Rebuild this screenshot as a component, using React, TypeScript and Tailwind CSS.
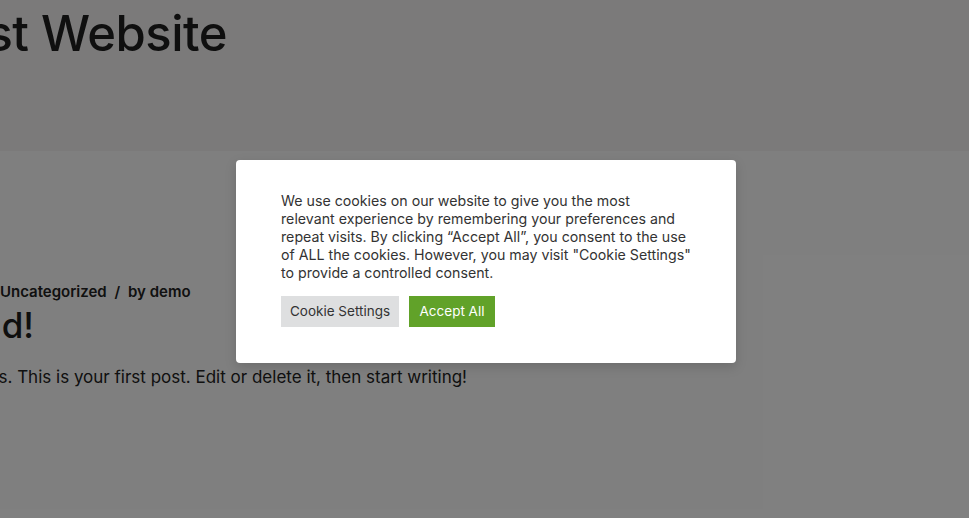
import React from "react";

export default function App() {
  const font = { fontFamily: "Inter, 'DejaVu Sans', sans-serif" };
  return (
    <div className="relative w-[969px] h-[518px] overflow-hidden bg-white" style={font}>
      <header className="h-[151px] bg-[#f6f5f5] pt-[4px]">
        <div className="flex justify-end w-[227px]">
          <h1 className="whitespace-nowrap text-[49px] font-medium tracking-[-0.5px] text-[#1e1e1e] leading-[60px]">
            My Test Website
          </h1>
        </div>
      </header>
      <main className="pt-[131px]">
        <div className="text-[15px] font-semibold text-[#222] leading-[20px] whitespace-nowrap">
          Uncategorized <span className="mx-[4px]">/</span> by demo
        </div>
        <div className="flex justify-end w-[34px] mt-[1px]">
          <h2 className="whitespace-nowrap text-[35px] font-medium text-[#1e1e1e] leading-[44px]">
            Hello world!
          </h2>
        </div>
        <div className="flex justify-end w-[467px] mt-[18px]">
          <p className="whitespace-nowrap text-[17px] text-[#222] leading-[24px]">
            Welcome to WordPress. This is your first post. Edit or delete it, then start writing!
          </p>
        </div>
      </main>

      <div className="absolute inset-0 bg-black/50" />

      <div className="absolute left-[236px] top-[160px] w-[500px] h-[203px] rounded-[4px] bg-white shadow-[0_4px_12px_rgba(0,0,0,0.15)] pl-[45px] pr-[30px] pt-[32px]">
        <p className="text-[14.2px] leading-[18px] text-[#333] whitespace-nowrap">
          We use cookies on our website to give you the most
          <br />
          relevant experience by remembering your preferences and
          <br />
          repeat visits. By clicking “Accept All”, you consent to the use
          <br />
          of ALL the cookies. However, you may visit "Cookie Settings"
          <br />
          to provide a controlled consent.
        </p>
        <div className="flex gap-[10px] mt-[14px]">
          <button className="h-[31px] w-[118px] bg-[#dedfe0] text-[#333] text-[13.5px] flex items-center justify-center">
            Cookie Settings
          </button>
          <button className="h-[31px] w-[86px] bg-[#61a229] text-white text-[13.5px] flex items-center justify-center">
            Accept All
          </button>
        </div>
      </div>
    </div>
  );
}
